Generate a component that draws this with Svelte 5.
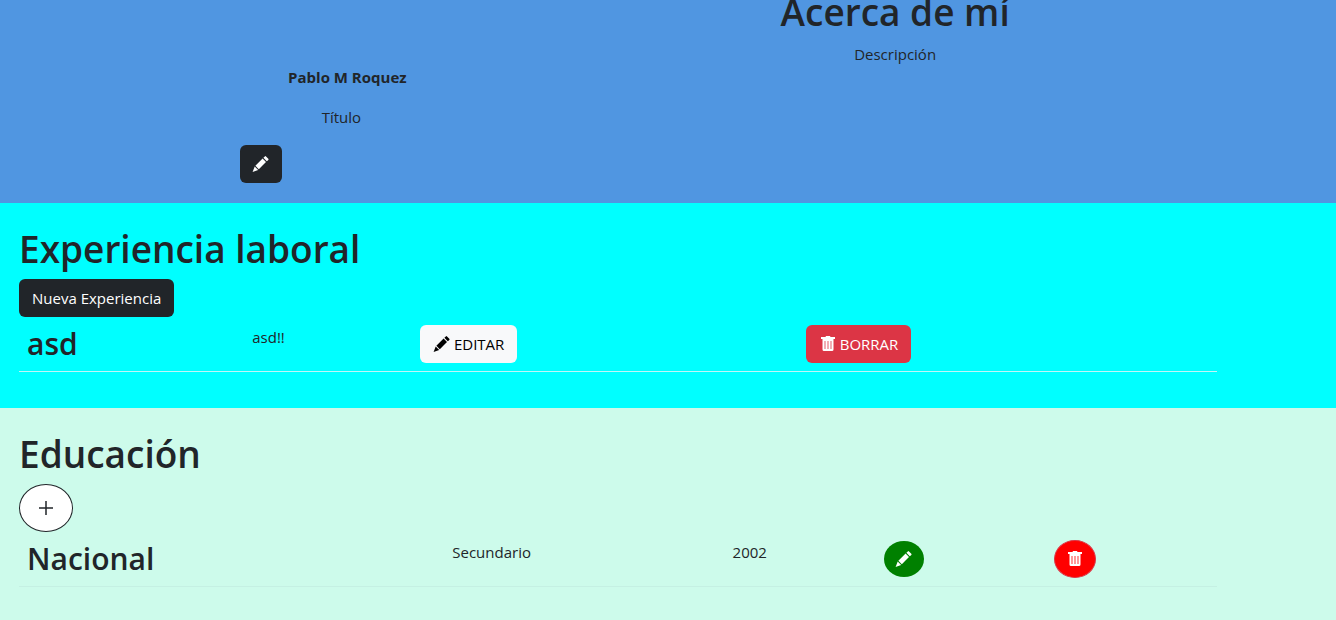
<script>
  const jobs = [{ name: 'asd', description: 'asd!!' }];
  const studies = [{ name: 'Nacional', level: 'Secundario', year: '2002' }];
</script>

{#snippet pencil()}
  <svg class="icon" viewBox="0 0 18 18" aria-hidden="true">
    <path d="M.6 17 2.7 11.4 6.2 14.9Z" />
    <path d="M3.4 10.8 10.6 3.6 14 7 6.8 14.2Z" />
    <path d="M11.4 2.8 12.8 1.4Q13.4.8 14 1.4L16.3 3.7Q16.9 4.3 16.3 4.9L14.8 6.2Z" />
  </svg>
{/snippet}

{#snippet trash()}
  <svg class="icon" viewBox="0 0 18 18" aria-hidden="true">
    <path d="M7 1H11L11.5 2H16V4H2V2H6.5Z" />
    <path fill-rule="evenodd" d="M3.5 4H14.5V14.5Q14.5 16 13 16H5Q3.5 16 3.5 14.5ZM5.6 6V14H6.4V6ZM8.6 6V14H9.4V6ZM11.6 6V14H12.4V6Z" />
  </svg>
{/snippet}

<header class="intro">
  <div class="person">
    <strong>Pablo M Roquez</strong>
    <p>Título</p>
    <button class="btn dark" aria-label="Editar perfil">{@render pencil()}</button>
  </div>
  <div class="about">
    <h1>Acerca de mí</h1>
    <p>Descripción</p>
  </div>
</header>

<section class="experience">
  <h1>Experiencia laboral</h1>
  <button class="btn dark">Nueva Experiencia</button>
  <table>
    <colgroup><col class="job" /><col class="detail" /><col class="change" /><col /></colgroup>
    <tbody>
      {#each jobs as job}
        <tr>
          <td><h2>{job.name}</h2></td>
          <td>{job.description}</td>
          <td><button class="btn light">{@render pencil()} EDITAR</button></td>
          <td><button class="btn danger">{@render trash()} BORRAR</button></td>
        </tr>
      {/each}
    </tbody>
  </table>
</section>

<section class="education">
  <h1>Educación</h1>
  <button class="add" aria-label="Agregar educación">
    <svg viewBox="0 0 14 14" aria-hidden="true"><path d="M7 0V14M0 7H14" /></svg>
  </button>
  <table>
    <colgroup><col class="school" /><col class="level" /><col class="year" /><col class="action" /><col /></colgroup>
    <tbody>
      {#each studies as study}
        <tr>
          <td><h2>{study.name}</h2></td>
          <td>{study.level}</td>
          <td>{study.year}</td>
          <td><button class="round edit" aria-label="Editar">{@render pencil()}</button></td>
          <td><button class="round remove" aria-label="Borrar">{@render trash()}</button></td>
        </tr>
      {/each}
    </tbody>
  </table>
</section>

<style>
  :global(body) {
    margin: 0;
    min-height: 100vh;
    background: #cdfbeb;
    color: #212529;
    font: 400 15px/24px "Segoe UI", "Open Sans", sans-serif;
  }
  h1, h2, p { margin: 0; }
  h1 { font-size: 37px; line-height: 48px; font-weight: 600; }
  h2 { font-size: 30px; line-height: 38px; font-weight: 600; }
  .intro {
    display: flex;
    justify-content: space-between;
    background: #5096e1;
    padding-bottom: 20px;
  }
  .person {
    width: 16%;
    margin-left: 18%;
    padding-top: 65px;
    display: flex;
    flex-direction: column;
    align-items: center;
    gap: 16px;
  }
  .person p { padding-right: 12px; }
  .person .btn { align-self: flex-start; width: 42px; }
  .about { width: 66%; margin-top: -12px; text-align: center; }
  .about p { margin-top: 6px; }
  section { padding: 22px 119px 0 19px; }
  .experience { background: #00ffff; padding-bottom: 36px; }
  .education { padding-bottom: 32px; }
  section h1 { margin-bottom: 6px; }
  button { font: inherit; cursor: pointer; }
  .btn {
    display: inline-flex;
    align-items: center;
    justify-content: center;
    gap: 3px;
    height: 38px;
    padding: 0 12px;
    border: 1px solid transparent;
    border-radius: 6px;
    white-space: nowrap;
  }
  .dark { background: #212529; color: #fff; }
  .light { background: #f8f9fa; color: #000; }
  .danger { background: #dc3545; color: #fff; }
  .icon { width: 18px; height: 18px; flex: none; fill: currentColor; }
  table { width: 100%; table-layout: fixed; border-collapse: collapse; }
  td { padding: 8px; vertical-align: top; text-align: left; border-bottom: 1px solid #c5f0e3; }
  .experience td { border-color: #c3f5f7; }
  td button { vertical-align: top; }
  .job { width: 18.8%; }
  .detail { width: 14%; }
  .change { width: 32.2%; }
  .school { width: 35.5%; }
  .level { width: 23.4%; }
  .year { width: 12.6%; }
  .action { width: 14.2%; }
  .add {
    display: flex;
    align-items: center;
    justify-content: center;
    width: 54px;
    height: 48px;
    padding: 0;
    border: 1px solid #212529;
    border-radius: 50%;
    background: #fff;
  }
  .add svg { width: 14px; height: 14px; fill: none; stroke: #212529; stroke-width: 1.5; }
  .round {
    display: flex;
    align-items: center;
    justify-content: center;
    padding: 0;
    border: 0;
    border-radius: 50%;
    color: #fff;
  }
  .edit { width: 40px; height: 36px; margin-top: 1px; background: #008000; }
  .remove { width: 42px; height: 38px; background: #ff0000; border: 1px solid #dc3545; }
</style>
